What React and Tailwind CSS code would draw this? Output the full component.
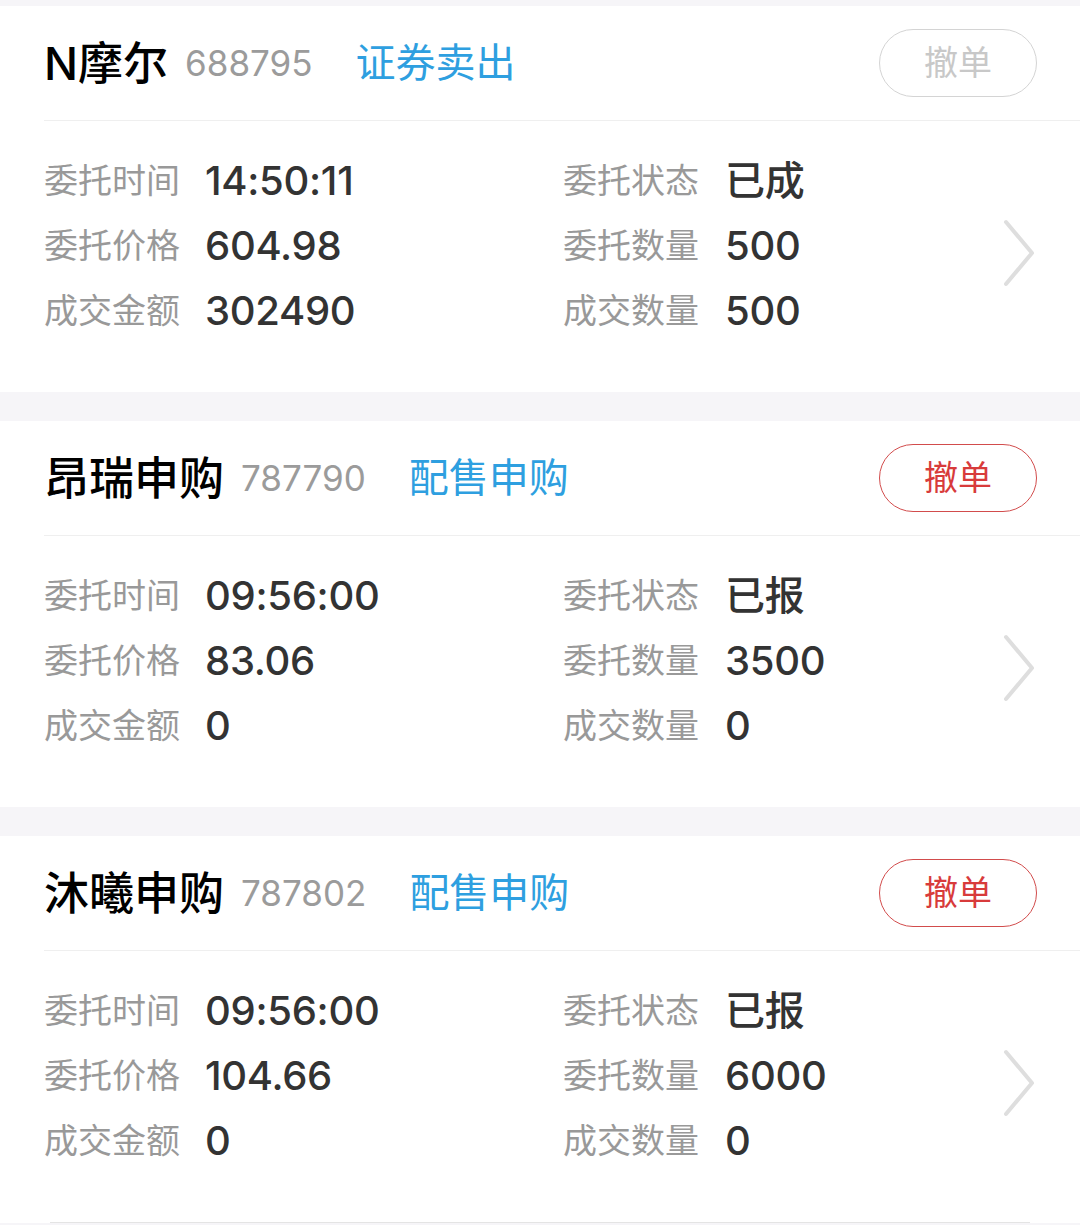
const orders = [
  {
    name: 'N摩尔',
    code: '688795',
    type: '证券卖出',
    canCancel: false,
    rows: [
      ['委托时间', '14:50:11', '委托状态', '已成'],
      ['委托价格', '604.98', '委托数量', '500'],
      ['成交金额', '302490', '成交数量', '500'],
    ],
  },
  {
    name: '昂瑞申购',
    code: '787790',
    type: '配售申购',
    canCancel: true,
    rows: [
      ['委托时间', '09:56:00', '委托状态', '已报'],
      ['委托价格', '83.06', '委托数量', '3500'],
      ['成交金额', '0', '成交数量', '0'],
    ],
  },
  {
    name: '沐曦申购',
    code: '787802',
    type: '配售申购',
    canCancel: true,
    rows: [
      ['委托时间', '09:56:00', '委托状态', '已报'],
      ['委托价格', '104.66', '委托数量', '6000'],
      ['成交金额', '0', '成交数量', '0'],
    ],
  },
]

function Chevron() {
  return (
    <svg width="36" height="70" viewBox="0 0 36 70" fill="none" className="mt-[14px]">
      <path d="M5 4 L31 35 L5 66" stroke="#dedede" strokeWidth="4" strokeLinecap="round" strokeLinejoin="round" />
    </svg>
  )
}

function OrderCard({ order, last }) {
  return (
    <div className="bg-white">
      <div className="flex items-center h-[114px] pl-[44px] pr-[43px]">
        <span className="text-[45px] font-medium text-black leading-none">{order.name}</span>
        <span className="ml-[17px] text-[35px] text-[#9b9b9b] leading-none">{order.code}</span>
        <span className="ml-[43px] text-[40px] text-[#2e9fe0] leading-none">{order.type}</span>
        <button
          className={
            order.canCancel
              ? 'ml-auto w-[158px] h-[68px] rounded-full border border-[#d24c4c] text-[#d83b3b] text-[34px] leading-none'
              : 'ml-auto w-[158px] h-[68px] rounded-full border border-[#d4d4d4] text-[#c8c8c8] text-[34px] leading-none'
          }
        >
          撤单
        </button>
      </div>
      <div className="ml-[44px] h-px bg-[#efefef]" />
      <div className="flex items-center pl-[44px] pr-[43px] pt-[27px] pb-[49px]">
        <div className="flex-1 flex flex-col">
          {order.rows.map((r) => (
            <div key={r[0]} className="flex items-center h-[65px]">
              <div className="w-[519px] flex items-center">
                <span className="w-[161px] text-[34px] text-[#999999]">{r[0]}</span>
                <span className="text-[40px] font-medium tracking-[-0.3px] text-[#333333]">{r[1]}</span>
              </div>
              <div className="flex items-center">
                <span className="w-[162px] text-[34px] text-[#999999]">{r[2]}</span>
                <span className="text-[40px] font-medium tracking-[-0.3px] text-[#333333]">{r[3]}</span>
              </div>
            </div>
          ))}
        </div>
        <Chevron />
      </div>
      {last && <div className="mx-[50px] h-px bg-[#e4e4e4]" />}
    </div>
  )
}

export default function App() {
  return (
    <div
      className="min-h-screen bg-[#f6f5f8] pt-[6px] flex flex-col gap-[29px] overflow-hidden"
      style={{ fontFamily: '"Inter", "Noto Sans CJK SC", sans-serif' }}
    >
      {orders.map((o, i) => (
        <OrderCard key={o.code} order={o} last={i === orders.length - 1} />
      ))}
    </div>
  )
}
